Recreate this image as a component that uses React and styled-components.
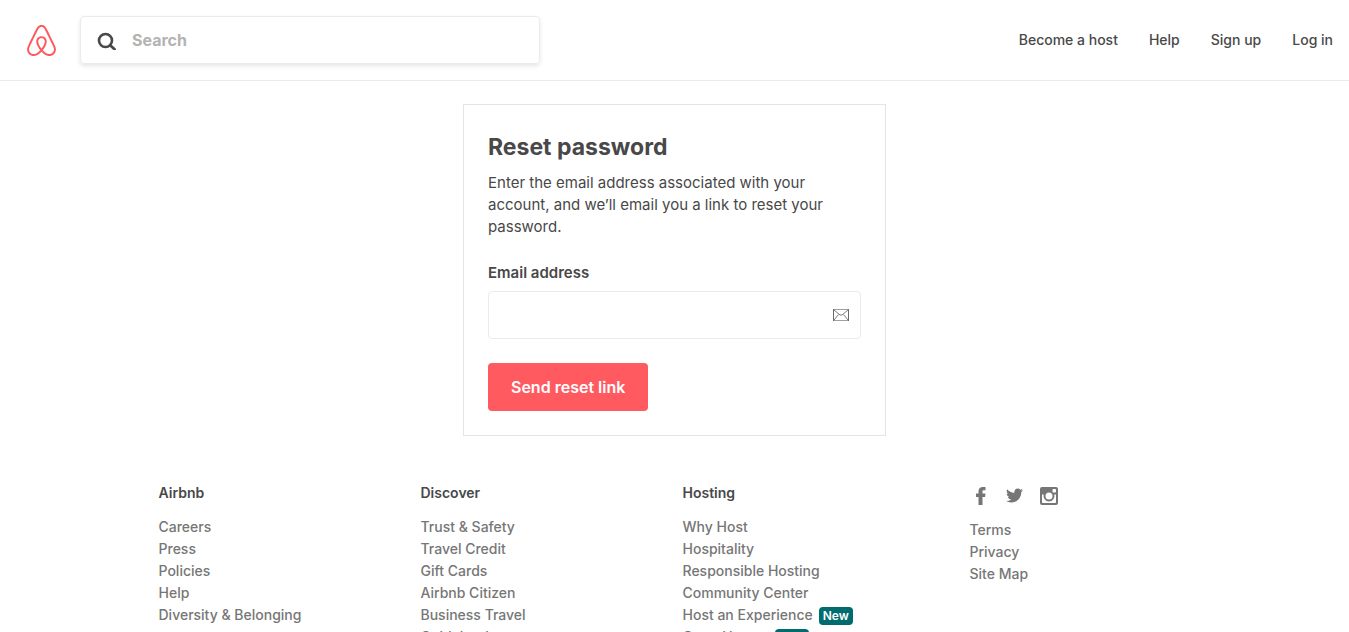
import React from "react";
import styled, { createGlobalStyle } from "styled-components";
import { SiAirbnb } from "react-icons/si";
import { FaTwitter } from "react-icons/fa";

const GlobalStyle = createGlobalStyle`
  *, *::before, *::after { box-sizing: border-box; }
  body {
    margin: 0;
    background: #fff;
    color: #484848;
    font-family: Inter, "Liberation Sans", sans-serif;
    font-size: 14px;
    line-height: 22px;
  }
  h1, h2, p, ul { margin: 0; padding: 0; }
  ul { list-style: none; }
  a { text-decoration: none; }
  button, input { font-family: inherit; }
`;

const Header = styled.header`
  display: flex;
  align-items: center;
  gap: 23px;
  padding: 16px 16px 16px 26px;
  border-bottom: 1px solid #ebebeb;
`;

const LogoLink = styled.a`
  display: flex;
  color: #ff5a5f;
`;

const SearchBox = styled.label`
  display: flex;
  align-items: center;
  gap: 15px;
  flex: 0 1 460px;
  height: 48px;
  padding: 0 16px;
  border: 1px solid #ebebeb;
  border-radius: 4px;
  box-shadow: 0 2px 4px rgba(0, 0, 0, 0.1);
`;

const SearchInput = styled.input`
  flex: 1;
  min-width: 0;
  padding: 0;
  border: 0;
  outline: 0;
  color: #484848;
  font-size: 16px;
  font-weight: 700;
  &::placeholder { color: #b3b3b3; opacity: 1; }
`;

const Nav = styled.nav`
  display: flex;
  gap: 31px;
  margin-left: auto;
`;

const NavLink = styled.a`
  color: #484848;
  font-weight: 500;
  white-space: nowrap;
`;

const Card = styled.form`
  max-width: 423px;
  margin: 23px auto 46px;
  padding: 24px;
  border: 1px solid #e4e4e4;
`;

const Title = styled.h1`
  font-size: 23px;
  font-weight: 700;
  line-height: 37px;
`;

const Intro = styled.p`
  margin-top: 6px;
  font-size: 15px;
`;

const FieldLabel = styled.label`
  display: block;
  margin: 24px 0 7px;
  font-size: 15px;
  font-weight: 600;
`;

const Field = styled.div`
  display: flex;
  align-items: center;
  height: 48px;
  padding: 0 11px;
  border: 1px solid #ebebeb;
  border-radius: 4px;
`;

const EmailInput = styled.input`
  flex: 1;
  min-width: 0;
  padding: 0;
  border: 0;
  outline: 0;
  font-size: 16px;
`;

const SubmitButton = styled.button`
  display: block;
  height: 48px;
  margin-top: 24px;
  padding: 0 23px;
  border: 0;
  border-radius: 4px;
  background: #ff5a5f;
  color: #fff;
  font-size: 16px;
  font-weight: 600;
  cursor: pointer;
`;

const Footer = styled.footer`
  display: grid;
  grid-template-columns: repeat(4, 1fr);
  max-width: 1048px;
  margin: 0 auto;
  padding-bottom: 48px;
`;

const Column = styled.div`
  padding-left: ${(p) => (p.$inset ? 33 : 8)}px;
`;

const ColumnTitle = styled.h2`
  margin-bottom: 12px;
  font-size: 14px;
  font-weight: 600;
`;

const LinkItem = styled.li`
  display: flex;
  align-items: center;
  gap: 6px;
  height: 22px;
`;

const FooterLink = styled.a`
  color: #767676;
  font-weight: 500;
  white-space: nowrap;
`;

const Badge = styled.span`
  margin-top: 2px;
  padding: 0 4px;
  border-radius: 4px;
  background: #006c70;
  color: #fff;
  font-size: 12px;
  font-weight: 600;
  line-height: 18px;
`;

const SocialRow = styled.div`
  display: flex;
  gap: 12px;
  padding-top: 2px;
  margin-bottom: 12px;
`;

const SocialLink = styled.a`
  display: flex;
  align-items: center;
  justify-content: center;
  width: 22px;
  height: 23px;
  color: #767676;
`;

const SearchIcon = () => (
  <svg width="20" height="20" viewBox="0 0 20 20" fill="none" stroke="#484848" aria-hidden="true">
    <circle cx="8.500" cy="10.500" r="6.500" strokeWidth="2.600" />
    <path d="M13.200 15.200l4.300 4" strokeWidth="2.800" strokeLinecap="round" />
  </svg>
);

const MailIcon = () => (
  <svg width="16" height="12" viewBox="0 0 16 12" fill="none" aria-hidden="true">
    <path d="M0 .5h16M0 11.500h16" stroke="#a0a0a0" />
    <path d="M.5 0v12M15.500 0v12" stroke="#6a6a6a" />
    <path d="M1 1l6 5h2l6-5M1 11l4.500-5.500M15 11l-4.500-5.500" stroke="#6a6a6a" strokeWidth="0.900" />
  </svg>
);

const FacebookIcon = () => (
  <svg width="10" height="18" viewBox="0 0 10 18" aria-hidden="true">
    <path
      fill="currentColor"
      d="M9.500.1v3.100H7.900C6.800 3.200 6.500 3.700 6.500 4.600v1.800h3L9.100 9.900H6.500V18H2.500V9.900H0V6.400h2.500V4.300C2.500 1.500 4.200 0 6.900 0c1.300 0 2.300.1 2.600.1z"
    />
  </svg>
);

const InstagramIcon = () => (
  <svg width="18" height="18" viewBox="0 0 18 18" aria-hidden="true">
    <path
      fill="currentColor"
      fillRule="evenodd"
      d="M2 0h14a2 2 0 0 1 2 2v14a2 2 0 0 1-2 2H2a2 2 0 0 1-2-2V2a2 2 0 0 1 2-2zM13.200 2a.7.7 0 0 0-.7.7v2.100a.7.7 0 0 0 .7.7h2.100a.7.7 0 0 0 .7-.7V2.700a.7.7 0 0 0-.7-.7zM2 7.500v7.800a.7.7 0 0 0 .7.7h12.600a.7.7 0 0 0 .7-.7V7.500h-1.700a5.500 5.500 0 1 1-10.600 0zM9 5.500a3.500 3.500 0 1 0 0 7 3.500 3.500 0 0 0 0-7z"
    />
  </svg>
);

const columns = [
  {
    title: "Airbnb",
    links: [["Careers"], ["Press"], ["Policies"], ["Help"], ["Diversity & Belonging"]],
  },
  {
    title: "Discover",
    links: [["Trust & Safety"], ["Travel Credit"], ["Gift Cards"], ["Airbnb Citizen"], ["Business Travel"], ["Guidebooks"]],
  },
  {
    title: "Hosting",
    links: [["Why Host"], ["Hospitality"], ["Responsible Hosting"], ["Community Center"], ["Host an Experience", true], ["Open Homes", true]],
  },
];

const LinkList = ({ links }) => (
  <ul>
    {links.map(([text, isNew]) => (
      <LinkItem key={text}>
        <FooterLink href="#">{text}</FooterLink>
        {isNew && <Badge>New</Badge>}
      </LinkItem>
    ))}
  </ul>
);

export default function App() {
  return (
    <>
      <GlobalStyle />
      <Header>
        <LogoLink href="#" aria-label="Airbnb homepage">
          <SiAirbnb size={31} />
        </LogoLink>
        <SearchBox>
          <SearchIcon />
          <SearchInput type="search" placeholder="Search" aria-label="Search" />
        </SearchBox>
        <Nav>
          {["Become a host", "Help", "Sign up", "Log in"].map((text) => (
            <NavLink key={text} href="#">{text}</NavLink>
          ))}
        </Nav>
      </Header>
      <main>
        <Card onSubmit={(e) => e.preventDefault()}>
          <Title>Reset password</Title>
          <Intro>
            Enter the email address associated with your account, and we’ll email you a link to reset your password.
          </Intro>
          <FieldLabel htmlFor="email">Email address</FieldLabel>
          <Field>
            <EmailInput id="email" type="email" />
            <MailIcon />
          </Field>
          <SubmitButton type="submit">Send reset link</SubmitButton>
        </Card>
      </main>
      <Footer>
        {columns.map(({ title, links }) => (
          <Column key={title}>
            <ColumnTitle>{title}</ColumnTitle>
            <LinkList links={links} />
          </Column>
        ))}
        <Column $inset>
          <SocialRow>
            <SocialLink href="#" aria-label="Facebook"><FacebookIcon /></SocialLink>
            <SocialLink href="#" aria-label="Twitter"><FaTwitter size={17} /></SocialLink>
            <SocialLink href="#" aria-label="Instagram"><InstagramIcon /></SocialLink>
          </SocialRow>
          <LinkList links={[["Terms"], ["Privacy"], ["Site Map"]]} />
        </Column>
      </Footer>
    </>
  );
}
